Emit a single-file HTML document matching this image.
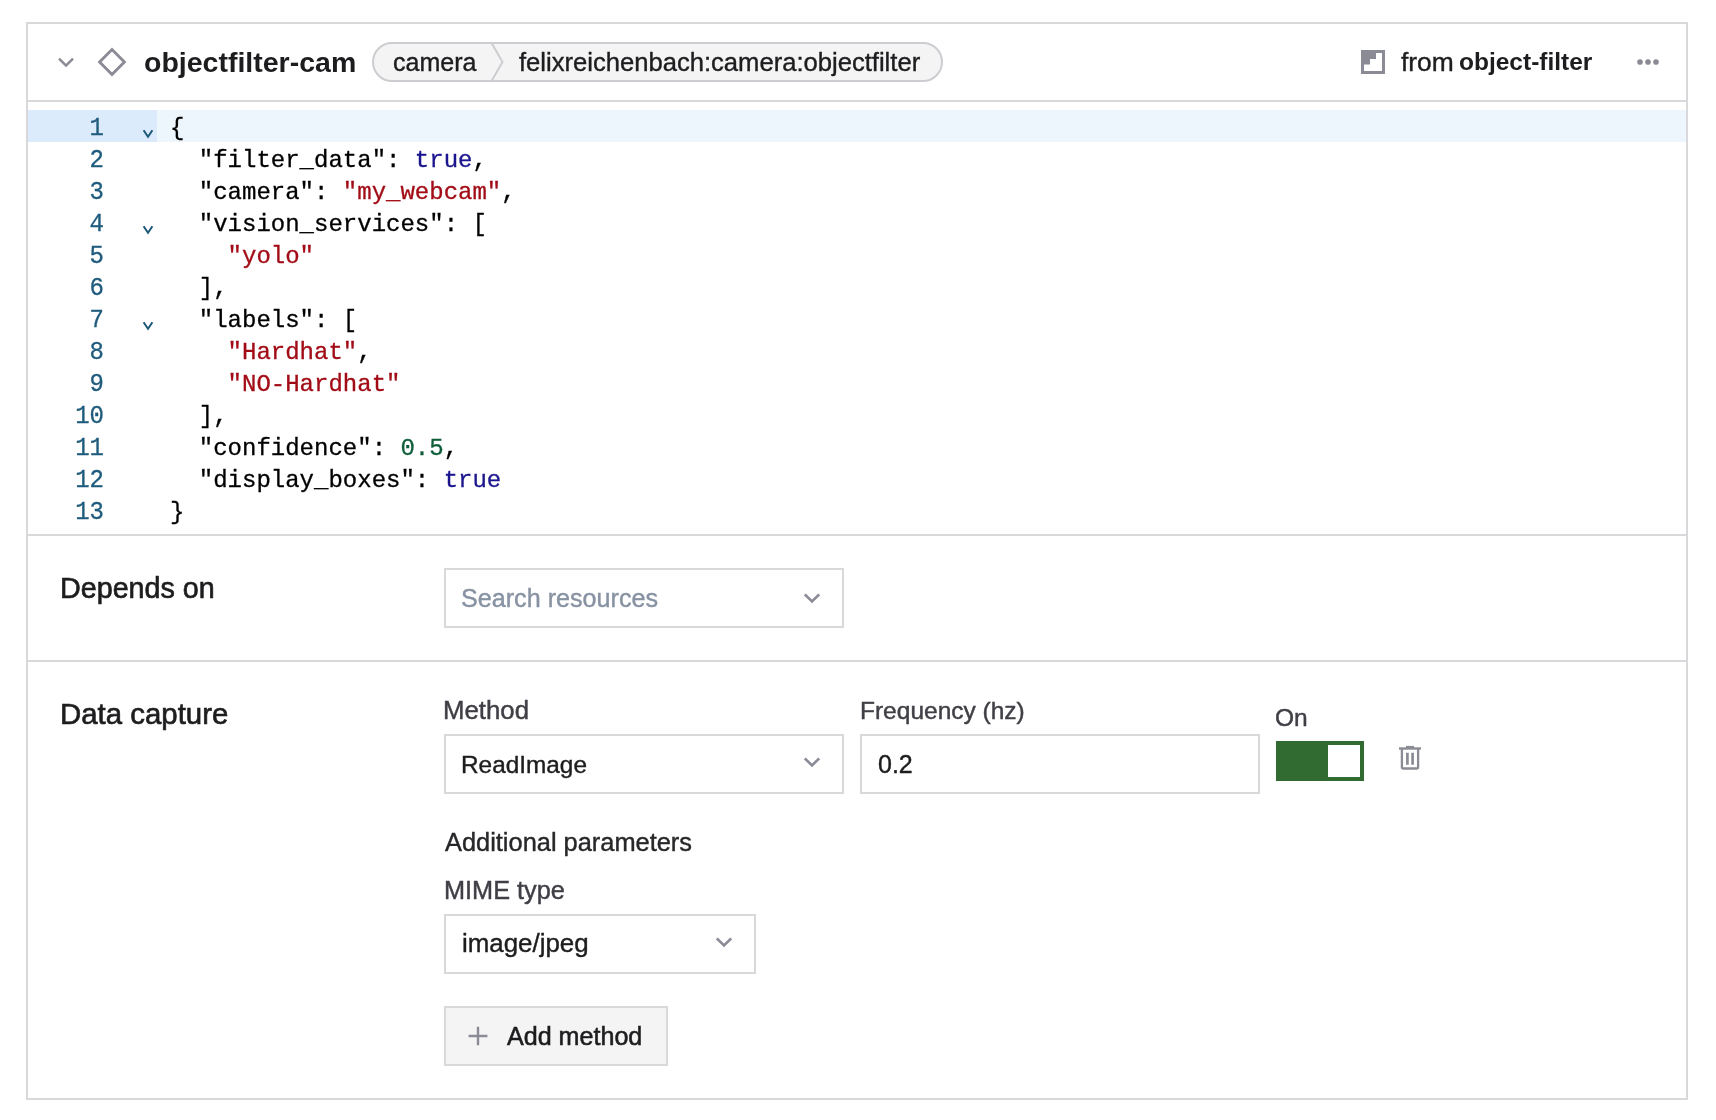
<!DOCTYPE html>
<html>
<head>
<meta charset="utf-8">
<style>
html,body{margin:0;padding:0;background:#fff;}
body{width:1716px;height:1120px;position:relative;overflow:hidden;font-family:"Liberation Sans",sans-serif;color:#1d1d1f;}
.a{position:absolute;white-space:pre;will-change:transform;}
.card{position:absolute;left:26px;top:22px;width:1658px;height:1074px;border:2px solid #d9d9dc;}
.hr{position:absolute;left:28px;width:1658px;height:2px;background:#d9d9dc;}
.code{position:absolute;left:28px;top:110px;width:1658px;font-family:"Liberation Mono",monospace;font-size:24px;}
.ln{will-change:transform;position:absolute;left:28px;width:1658px;height:32px;line-height:32px;font-family:"Liberation Mono",monospace;font-size:24px;white-space:pre;}
.ln .n{position:absolute;left:0;top:2.6px;width:76px;text-align:right;color:#1f5b7c;-webkit-text-stroke:0.3px currentColor;transform:scaleY(1.1);transform-origin:0 22.4px;}
.ln .t{position:absolute;left:142px;top:2.6px;color:#000;-webkit-text-stroke:0.3px currentColor;}
.ln.act{background:#eef6fd;}
.ln.act .g{position:absolute;left:0;top:0;width:129px;height:32px;background:#dcebfc;}
.s{color:#a20c16;} .k{color:#1b168e;} .num{color:#0f5d3a;}
.fold{position:absolute;left:114px;}
.box{position:absolute;border:2px solid #d9d9dc;background:#fff;box-sizing:border-box;}
.lbl{color:#3f3f46;-webkit-text-stroke:0.45px #3f3f46;}
</style>
</head>
<body>
<div class="card"></div>
<div class="hr" style="top:100px"></div>
<div class="hr" style="top:534px"></div>
<div class="hr" style="top:660px"></div>

<!-- header -->
<svg class="a" style="left:0;top:0" width="1716" height="110">
  <polyline points="59,58.6 66,65.6 73,58.6" fill="none" stroke="#8a8a94" stroke-width="2.5"/>
  <polygon points="112,49.6 124.4,62 112,74.4 99.6,62" fill="none" stroke="#8a8a94" stroke-width="2.8"/>
</svg>

<div class="a" style="left:144px;top:47.8px;font-size:28.5px;line-height:28.5px;font-weight:bold;color:#1d1d1f;">objectfilter-cam</div>

<!-- pill -->
<div class="a" style="left:372px;top:42px;width:571px;height:40px;box-sizing:border-box;border:2px solid #cdcdd1;border-radius:20px;background:#f4f4f5;"></div>
<svg class="a" style="left:480px;top:40px" width="40" height="44"><polyline points="11,2 22.5,22 11,42" fill="none" stroke="#cdcdd1" stroke-width="2"/></svg>
<div class="a" style="left:393px;top:50px;font-size:25px;line-height:25px;color:#1d1d1f;;-webkit-text-stroke:0.4px currentColor">camera</div>
<div class="a" style="left:519px;top:50px;font-size:25.6px;line-height:25.6px;color:#1d1d1f;;-webkit-text-stroke:0.4px currentColor">felixreichenbach:camera:objectfilter</div>

<!-- right header -->
<svg class="a" style="left:1361px;top:50px" width="24" height="24"><path d="M0 0H24V24H0Z M3 14.6V21H21V3H15V9H9V14.6Z" fill="#8b8b95" fill-rule="evenodd"/></svg>
<div class="a" style="left:1400.5px;top:48.6px;font-size:26.4px;line-height:26.4px;color:#1d1d1f;-webkit-text-stroke:0.4px #1d1d1f">from</div>
<div class="a" style="left:1458.5px;top:50px;font-size:24.5px;line-height:24.5px;font-weight:bold;color:#1d1d1f;">object-filter</div>
<svg class="a" style="left:1630px;top:55px" width="36" height="14"><circle cx="10" cy="7" r="2.8" fill="#8b8b95"/><circle cx="18" cy="7" r="2.8" fill="#8b8b95"/><circle cx="26" cy="7" r="2.8" fill="#8b8b95"/></svg>

<!-- code -->
<div class="ln act" style="top:110px"><span class="g"></span><span class="n">1</span><span class="t">{</span></div>
<div class="ln" style="top:142px"><span class="n">2</span><span class="t">  "filter_data": <span class="k">true</span>,</span></div>
<div class="ln" style="top:174px"><span class="n">3</span><span class="t">  "camera": <span class="s">"my_webcam"</span>,</span></div>
<div class="ln" style="top:206px"><span class="n">4</span><span class="t">  "vision_services": [</span></div>
<div class="ln" style="top:238px"><span class="n">5</span><span class="t">    <span class="s">"yolo"</span></span></div>
<div class="ln" style="top:270px"><span class="n">6</span><span class="t">  ],</span></div>
<div class="ln" style="top:302px"><span class="n">7</span><span class="t">  "labels": [</span></div>
<div class="ln" style="top:334px"><span class="n">8</span><span class="t">    <span class="s">"Hardhat"</span>,</span></div>
<div class="ln" style="top:366px"><span class="n">9</span><span class="t">    <span class="s">"NO-Hardhat"</span></span></div>
<div class="ln" style="top:398px"><span class="n">10</span><span class="t">  ],</span></div>
<div class="ln" style="top:430px"><span class="n">11</span><span class="t">  "confidence": <span class="num">0.5</span>,</span></div>
<div class="ln" style="top:462px"><span class="n">12</span><span class="t">  "display_boxes": <span class="k">true</span></span></div>
<div class="ln" style="top:494px"><span class="n">13</span><span class="t">}</span></div>

<svg class="a" style="left:0;top:0" width="200" height="540">
  <g fill="none" stroke="#1d5877" stroke-width="2">
  <polyline points="143.6,130.3 148,136.8 152.4,130.3"/>
  <polyline points="143.6,226.3 148,232.8 152.4,226.3"/>
  <polyline points="143.6,322.3 148,328.8 152.4,322.3"/>
  </g>
</svg>

<!-- depends on -->
<div class="a" style="left:60px;top:574px;font-size:28.7px;line-height:28.7px;color:#1d1d1f;-webkit-text-stroke:0.65px #1d1d1f;">Depends on</div>
<div class="box" style="left:444px;top:568px;width:400px;height:60px;"></div>
<div class="a" style="left:461px;top:586px;font-size:25.15px;line-height:25.15px;color:#8792a2;;-webkit-text-stroke:0.4px currentColor">Search resources</div>
<svg class="a" style="left:800px;top:588px" width="24" height="20"><polyline points="4.8,6.4 12,13.4 19.2,6.4" fill="none" stroke="#8b8b95" stroke-width="2.7"/></svg>

<!-- data capture -->
<div class="a" style="left:60px;top:699px;font-size:29.4px;line-height:29.4px;color:#1d1d1f;-webkit-text-stroke:0.65px #1d1d1f;">Data capture</div>
<div class="a lbl" style="left:443px;top:698px;font-size:25.8px;line-height:25.8px;">Method</div>
<div class="box" style="left:444px;top:734px;width:400px;height:60px;"></div>
<div class="a" style="left:461px;top:753px;font-size:24.36px;line-height:24.36px;color:#1d1d1f;;-webkit-text-stroke:0.4px currentColor">ReadImage</div>
<svg class="a" style="left:800px;top:752px" width="24" height="20"><polyline points="4.8,6.4 12,13.4 19.2,6.4" fill="none" stroke="#8b8b95" stroke-width="2.7"/></svg>

<div class="a lbl" style="left:860px;top:699px;font-size:24.5px;line-height:24.5px;">Frequency (hz)</div>
<div class="box" style="left:860px;top:734px;width:400px;height:60px;"></div>
<div class="a" style="left:878px;top:752px;font-size:25px;line-height:25px;color:#1d1d1f;;-webkit-text-stroke:0.4px currentColor">0.2</div>

<div class="a lbl" style="left:1275px;top:706px;font-size:24.5px;line-height:24.5px;">On</div>
<div class="a" style="left:1276px;top:741px;width:88px;height:40px;background:#316b31;"></div>
<div class="a" style="left:1328px;top:745px;width:32px;height:32px;background:#fff;"></div>
<svg class="a" style="left:1396px;top:744px" width="28" height="28">
  <path d="M3 4.5H25" stroke="#8b8b95" stroke-width="2.4"/>
  <path d="M10 3.2H18" stroke="#8b8b95" stroke-width="2.6"/>
  <path d="M5.9 5V23Q5.9 24.5 7.4 24.5H20.6Q22.1 24.5 22.1 23V5" fill="none" stroke="#8b8b95" stroke-width="2.3"/>
  <path d="M11.4 8.7V20.8M16.6 8.7V20.8" stroke="#8b8b95" stroke-width="2.7"/>
</svg>

<div class="a" style="left:445px;top:830px;font-size:25.4px;line-height:25.4px;color:#27272a;;-webkit-text-stroke:0.4px currentColor">Additional parameters</div>
<div class="a lbl" style="left:444px;top:878px;font-size:25.3px;line-height:25.3px;">MIME type</div>
<div class="box" style="left:444px;top:914px;width:312px;height:60px;"></div>
<div class="a" style="left:461.5px;top:931px;font-size:25.9px;line-height:25.9px;color:#1d1d1f;;-webkit-text-stroke:0.4px currentColor">image/jpeg</div>
<svg class="a" style="left:712px;top:932px" width="24" height="20"><polyline points="4.8,6.4 12,13.4 19.2,6.4" fill="none" stroke="#8b8b95" stroke-width="2.7"/></svg>

<div class="box" style="left:444px;top:1006px;width:224px;height:60px;background:#f4f4f5;"></div>
<svg class="a" style="left:466px;top:1024px" width="24" height="24"><path d="M12 2.8V21.3M2.6 12H21.4" stroke="#8b8b95" stroke-width="2.4"/></svg>
<div class="a" style="left:507px;top:1024px;font-size:25.1px;line-height:25.1px;color:#1d1d1f;-webkit-text-stroke:0.55px #1d1d1f;">Add method</div>

</body>
</html>
